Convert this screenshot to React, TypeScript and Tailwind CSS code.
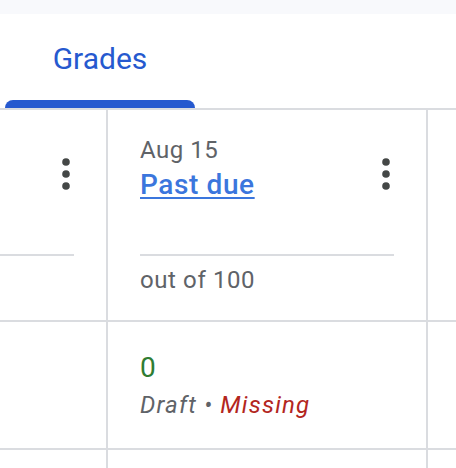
import React from 'react';

const Kebab = ({ className = '' }: { className?: string }) => (
  <svg width="16" height="36" viewBox="0 0 16 36" className={className} fill="#444746">
    <circle cx="8" cy="6" r="3.8" />
    <circle cx="8" cy="18" r="3.8" />
    <circle cx="8" cy="30" r="3.8" />
  </svg>
);

const Cell = ({ children, className = '' }: { children?: React.ReactNode; className?: string }) => (
  <div className={`bg-white ${className}`}>{children}</div>
);

const App = () => {
  return (
    <div className="w-[456px] h-[468px] overflow-hidden bg-white font-[Roboto,sans-serif]">
      <div className="h-[14px] bg-[#f8f9fc]" />

      {/* tab bar */}
      <div className="flex h-[96px] border-b-2 border-[#dadce0]">
        <div className="ml-[5px] flex w-[190px] flex-col">
          <div className="flex flex-1 items-center justify-center pt-[4px] text-[30px] leading-[36px] text-[#2659cf]">
            Grades
          </div>
          <div className="h-[8px] rounded-t-[8px] bg-[#2659cf]" />
        </div>
      </div>

      {/* grade table */}
      <div className="grid h-[358px] grid-cols-[106px_318px_1fr] grid-rows-[210px_126px_1fr] gap-[2px] bg-[#dadce0]">
        <Cell className="pr-[32px] pt-[24px]">
          <div className="flex h-[66px] items-start justify-end">
            <Kebab className="mt-[22px]" />
          </div>
          <div className="mt-[54px] h-[2px] bg-[#dadce0]" />
        </Cell>

        <Cell className="px-[32px] pt-[24px]">
          <div className="flex h-[66px] items-start justify-between">
            <div>
              <div className="text-[24px] leading-[32px] tracking-[0.5px] text-[#5f6368]">Aug 15</div>
              <a className="mt-[3px] block text-[28px] font-medium leading-[32px] tracking-[0.6px] text-[#3b76dd] underline decoration-2 underline-offset-[3px]">
                Past due
              </a>
            </div>
            <Kebab className="mt-[22px]" />
          </div>
          <div className="mt-[54px] h-[2px] bg-[#dadce0]" />
          <div className="mt-[8px] text-[24px] leading-[32px] tracking-[0.6px] text-[#5f6368]">out of 100</div>
        </Cell>

        <Cell />

        <Cell />

        <Cell className="px-[32px] pt-[30px]">
          <div className="text-[28px] leading-[32px] tracking-[1px] text-[#2f7d32]">0</div>
          <div className="mt-[7px] text-[24px] italic leading-[28px] tracking-[1.2px]">
            <span className="text-[#5f6368]">Draft • </span>
            <span className="text-[#b3261e]">Missing</span>
          </div>
        </Cell>

        <Cell />

        <Cell />
        <Cell />
        <Cell />
      </div>
    </div>
  );
};

export default App;
